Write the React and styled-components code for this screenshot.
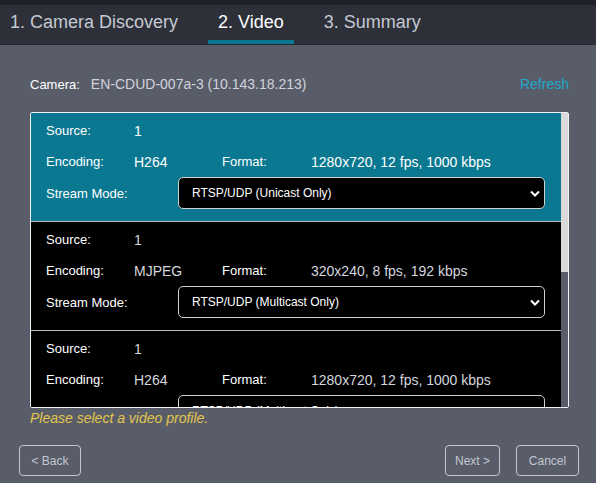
import React from "react";
import styled, { createGlobalStyle } from "styled-components";

const GlobalStyle = createGlobalStyle`
  html, body {
    margin: 0;
    padding: 0;
    background: #595d6a;
    font-family: "Liberation Sans", Arial, sans-serif;
  }
`;

const Page = styled.div`
  width: 596px;
  height: 483px;
  background: #595d6a;
  overflow: hidden;
  display: flex;
  flex-direction: column;
`;

const TopStrip = styled.div`
  height: 5px;
  background: #202127;
`;

const TabBar = styled.div`
  height: 40px;
  background: #2d3038;
  display: flex;
  align-items: stretch;
  border-bottom: 1px solid #26282f;
  box-sizing: border-box;
`;

const Tab = styled.div`
  padding: 0 10px 1px;
  margin-right: 20px;
  display: flex;
  align-items: center;
  font-size: 18px;
  color: ${(p) => (p.active ? "#ffffff" : "#c4c9d2")};
  border-bottom: 4px solid ${(p) => (p.active ? "#0b7891" : "transparent")};
  box-sizing: border-box;
`;

const Content = styled.div`
  flex: 1;
  display: flex;
  flex-direction: column;
  padding: 0 27px 0 30px;
`;

const CameraRow = styled.div`
  display: flex;
  align-items: center;
  height: 20px;
  margin-top: 29px;
`;

const CameraLabel = styled.span`
  font-size: 13px;
  color: #ffffff;
  margin-right: 11px;
`;

const CameraValue = styled.span`
  font-size: 14px;
  color: #d0d3da;
  flex: 1;
`;

const RefreshLink = styled.span`
  font-size: 14px;
  color: #1ea8ca;
  cursor: pointer;
`;

const ListBox = styled.div`
  margin-top: 18px;
  height: 296px;
  border: 1px solid #f2f2f2;
  border-radius: 2px;
  box-sizing: border-box;
  display: flex;
  background: #000;
`;

const ListContent = styled.div`
  flex: 1;
  overflow: hidden;
`;

const ScrollTrack = styled.div`
  width: 7px;
  background: #595d6a;
`;

const ScrollThumb = styled.div`
  height: 159px;
  background: #d9d9d9;
`;

const Profile = styled.div`
  padding: 2px 16px 12px 15px;
  background: ${(p) => (p.selected ? "#0b7891" : "#000000")};
  border-bottom: 1px solid #b8bcc4;
`;

const InfoRow = styled.div`
  display: grid;
  grid-template-columns: 88px 88px 89px 1fr;
  align-items: center;
  height: 31px;
`;

const Label = styled.span`
  font-size: 13px;
  color: #ffffff;
`;

const Value = styled.span`
  font-size: 14px;
  color: ${(p) => (p.selected ? "#ffffff" : "#d3d7de")};
`;

const ModeRow = styled.div`
  display: flex;
  align-items: center;
  height: 32px;
`;

const ModeLabel = styled(Label)`
  width: 132px;
`;

const Select = styled.div`
  flex: 1;
  height: 32px;
  box-sizing: border-box;
  border: 1px solid #d0d0d0;
  border-radius: 5px;
  background: #000;
  display: flex;
  align-items: center;
  justify-content: space-between;
  padding: 0 3px 0 13px;
  font-size: 12px;
  color: #ffffff;
`;

const Message = styled.div`
  font-size: 14px;
  font-style: italic;
  color: #e3c54a;
  margin-top: 2px;
`;

const Footer = styled.div`
  display: flex;
  align-items: center;
  padding: 0 17px 0 19px;
  margin-bottom: 7px;
`;

const Button = styled.button`
  height: 31px;
  width: ${(p) => p.w}px;
  padding: 0;
  background: transparent;
  border: 1px solid #c3c7cf;
  border-radius: 4px;
  color: #c3c7cf;
  font-family: "Liberation Sans", Arial, sans-serif;
  font-size: 12px;
  margin-left: ${(p) => p.ml || 0}px;
`;

const Spacer = styled.div`
  flex: 1;
`;

const Chevron = () => (
  <svg width="12" height="12" viewBox="0 0 12 12">
    <path d="M2 4.5 L6 8.5 L10 4.5" fill="none" stroke="#fff" strokeWidth="2" />
  </svg>
);

const profiles = [
  { enc: "H264", format: "1280x720, 12 fps, 1000 kbps", mode: "RTSP/UDP (Unicast Only)" },
  { enc: "MJPEG", format: "320x240, 8 fps, 192 kbps", mode: "RTSP/UDP (Multicast Only)" },
  { enc: "H264", format: "1280x720, 12 fps, 1000 kbps", mode: "RTSP/UDP (Multicast Only)" },
  { enc: "MJPEG", format: "640x480, 8 fps, 512 kbps", mode: "RTSP/UDP (Unicast Only)" },
  { enc: "H264", format: "640x360, 12 fps, 512 kbps", mode: "RTSP/UDP (Unicast Only)" },
];

const App = () => {
  return (
    <Page>
      <GlobalStyle />
      <TopStrip />
      <TabBar>
        <Tab>1. Camera Discovery</Tab>
        <Tab active>2. Video</Tab>
        <Tab>3. Summary</Tab>
      </TabBar>
      <Content>
        <CameraRow>
          <CameraLabel>Camera:</CameraLabel>
          <CameraValue>EN-CDUD-007a-3 (10.143.18.213)</CameraValue>
          <RefreshLink>Refresh</RefreshLink>
        </CameraRow>
        <ListBox>
          <ListContent>
            {profiles.map((p, i) => (
              <Profile key={i} selected={i === 0}>
                <InfoRow>
                  <Label>Source:</Label>
                  <Value selected={i === 0}>1</Value>
                </InfoRow>
                <InfoRow>
                  <Label>Encoding:</Label>
                  <Value selected={i === 0}>{p.enc}</Value>
                  <Label>Format:</Label>
                  <Value selected={i === 0}>{p.format}</Value>
                </InfoRow>
                <ModeRow>
                  <ModeLabel>Stream Mode:</ModeLabel>
                  <Select>
                    <span>{p.mode}</span>
                    <Chevron />
                  </Select>
                </ModeRow>
              </Profile>
            ))}
          </ListContent>
          <ScrollTrack>
            <ScrollThumb />
          </ScrollTrack>
        </ListBox>
        <Message>Please select a video profile.</Message>
      </Content>
      <Footer>
        <Button w={62}>&lt; Back</Button>
        <Spacer />
        <Button w={55}>Next &gt;</Button>
        <Button w={63} ml={16}>Cancel</Button>
      </Footer>
    </Page>
  );
};

export default App;
